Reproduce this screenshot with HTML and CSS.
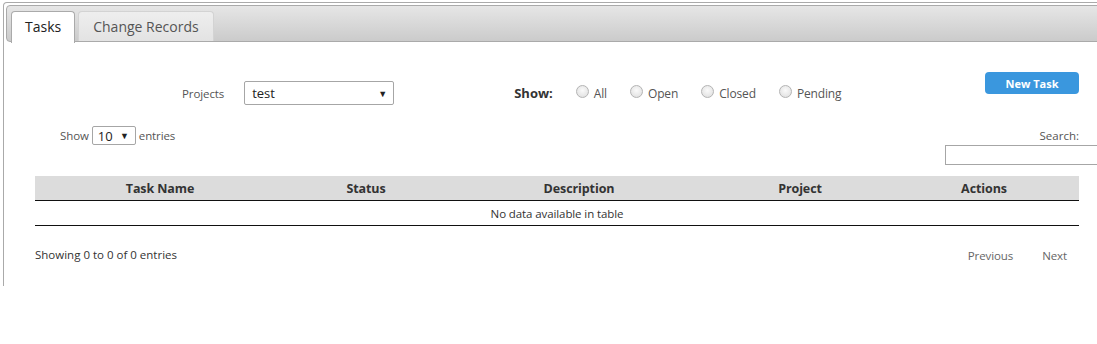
FILE: index.html
```html
<!DOCTYPE html>
<html>
<head>
<meta charset="utf-8">
<link rel="stylesheet" href="styles.css">
</head>
<body>
<div class="tabs">
  <ul class="tab-nav">
    <li class="tab active">Tasks</li>
    <li class="tab">Change Records</li>
  </ul>
  <div class="panel">
    <div class="filters">
      <div class="projects">
        <span class="lbl">Projects</span>
        <div class="select proj-select"><span>test</span><span class="arrow">▼</span></div>
      </div>
      <div class="show">
        <span class="show-lbl">Show:</span>
        <label class="radio"><span class="dot"></span>All</label>
        <label class="radio"><span class="dot"></span>Open</label>
        <label class="radio"><span class="dot"></span>Closed</label>
        <label class="radio"><span class="dot"></span>Pending</label>
      </div>
      <button class="btn">New Task</button>
    </div>
    <div class="dt-top">
      <div class="length">Show <div class="select len-select"><span>10</span><span class="arrow">▼</span></div> entries</div>
      <div class="search">
        <span>Search:</span>
        <div class="search-input"></div>
      </div>
    </div>
    <table class="grid">
      <colgroup>
        <col style="width:250px"><col style="width:162px"><col style="width:264px"><col style="width:178px"><col style="width:190px">
      </colgroup>
      <thead>
        <tr><th>Task Name</th><th>Status</th><th>Description</th><th>Project</th><th>Actions</th></tr>
      </thead>
      <tbody>
        <tr><td colspan="5" class="empty">No data available in table</td></tr>
      </tbody>
    </table>
    <div class="dt-bottom">
      <div class="info">Showing 0 to 0 of 0 entries</div>
      <div class="pager"><span>Previous</span><span>Next</span></div>
    </div>
  </div>
</div>
</body>
</html>
```
FILE: styles.css
```css
html, body { margin: 0; padding: 0; background: #fff; overflow: hidden; }
body { font-family: "Open Sans", "Noto Sans", sans-serif; color: #333; width: 1120px; }

.tabs {
  margin: 2px 0 0 3px;
  width: 1110px;
  border: 1px solid #aaa;
  border-bottom: none;
  border-radius: 4px 4px 0 0;
  padding: 2px;
}
.tab-nav {
  list-style: none;
  margin: 0;
  padding: 5px 4px 0;
  height: 30px;
  display: flex;
  gap: 3px;
  border: 1px solid #aaa;
  border-radius: 4px;
  background: linear-gradient(#e6e6e6, #cbcbcb);
}
.tab {
  height: 29px;
  padding: 0 13px;
  border: 1px solid #d3d3d3;
  border-bottom: none;
  border-radius: 4px 4px 0 0;
  background: linear-gradient(#eeeeee, #e3e3e3);
  color: #555;
  font-size: 14px;
  line-height: 29px;
}
.tab:nth-child(2) { padding: 0 14px; }
.tab.active {
  height: 31px;
  background: #fff;
  border-color: #aaa;
  color: #212121;
}
.panel {
  padding: 0 0 20px 29px;
  height: 222px;
}
.filters {
  width: 1044px;
  display: flex;
  align-items: flex-start;
  padding-top: 30px;
  height: 34px;
}
.projects {
  margin-left: 147px;
  margin-top: 9px;
  display: flex;
  align-items: center;
  gap: 20px;
  font-size: 11.5px;
  letter-spacing: -0.1px;
  color: #555;
}
.select {
  display: flex;
  align-items: center;
  justify-content: space-between;
  border: 1px solid #a6a6a6;
  border-radius: 2px;
  background: #fff;
  box-sizing: border-box;
  color: #222;
}
.proj-select { width: 150px; height: 24px; padding: 0 6px 0 7px; font-size: 13px; letter-spacing: 0; }
.arrow { font-size: 9px; color: #222; }
.show {
  margin-left: 120px;
  margin-top: 12px;
  display: flex;
  align-items: center;
  font-size: 12px;
  letter-spacing: -0.15px;
  color: #555;
}
.show-lbl { font-weight: 700; font-size: 13px; color: #333; margin-right: 23px; letter-spacing: 0; }
.radio { display: flex; align-items: center; margin-right: 23px; }
.radio .dot {
  width: 11px; height: 11px; border-radius: 50%;
  border: 1px solid #b4b4b4;
  background: radial-gradient(circle at 50% 40%, #fafafa, #dcdcdc);
  margin-right: 5px;
  position: relative; top: -2px;
}
.btn {
  margin-left: auto;
  width: 94px; height: 22px;
  border: none; border-radius: 4px;
  background: #3a97de;
  color: #fff;
  font-family: inherit;
  font-weight: 700;
  font-size: 11px;
  padding: 0;
}
.dt-top {
  width: 1044px;
  display: flex;
  justify-content: space-between;
  align-items: flex-start;
  margin-top: 20px;
  height: 50px;
}
.length {
  margin-left: 25px;
  display: flex; align-items: center; gap: 3px;
  font-size: 11.5px; letter-spacing: -0.1px; color: #555;
}
.len-select { width: 44px; height: 19px; padding: 0 6px 0 5px; font-size: 13px; letter-spacing: 0; }
.search {
  display: flex; flex-direction: column; align-items: flex-end;
  font-size: 11.5px; color: #555;
}
.search span { line-height: 19px; }
.search-input {
  width: 158px; height: 18px;
  border: 1px solid #a6a6a6;
  margin-right: -26px;
}
.grid {
  width: 1044px;
  border-collapse: collapse;
  table-layout: fixed;
}
.grid th {
  background: #dcdcdc;
  height: 24px;
  padding: 0;
  font-weight: 700;
  font-size: 12.5px;
  letter-spacing: -0.1px;
  color: #333;
  border-bottom: 1px solid #111;
}
.grid td {
  height: 24px; padding: 0; text-align: center; color: #333;
  font-size: 11.5px; letter-spacing: -0.1px;
  border-bottom: 1px solid #111;
}
.dt-bottom {
  width: 1044px;
  display: flex;
  justify-content: space-between;
  align-items: center;
  margin-top: 20px;
  font-size: 11.5px;
  color: #333;
}
.pager { display: flex; gap: 29px; color: #666; margin-right: 12px; padding-top: 2px; letter-spacing: -0.1px; }
```
